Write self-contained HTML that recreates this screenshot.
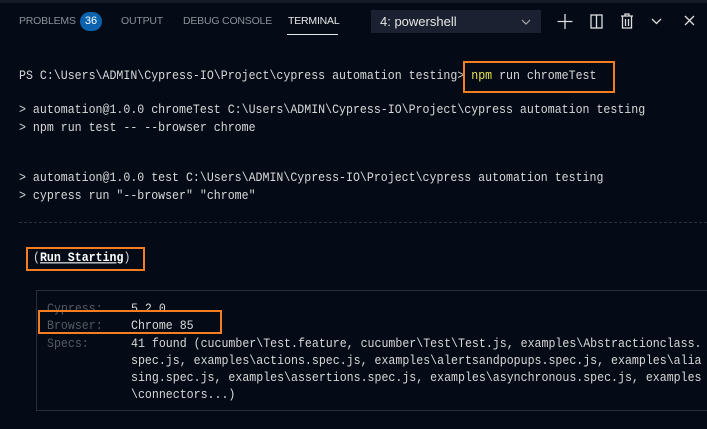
<!DOCTYPE html>
<html><head><style>
body{margin:0;width:707px;height:429px;background:#040b16;overflow:hidden;position:relative;font-family:"Liberation Sans",sans-serif}
.strip{position:absolute;left:0;top:0;width:707px;height:3px;background:#141b28}
.tab{position:absolute;top:15px;font-size:10.5px;color:#8c919a;letter-spacing:-0.2px}
.badge{position:absolute;left:80px;top:12px;width:22px;height:19px;border-radius:10px;background:#0b63b0;color:#fff;font-size:11px;text-align:center;line-height:19px}
.dd{position:absolute;left:371px;top:10px;width:170px;height:23px;background:#1b2130;color:#e6e6e6;font-size:13px;line-height:23px;padding-left:9px;box-sizing:border-box}
.m{position:absolute;font-family:"Liberation Mono",monospace;font-size:11.6px;color:#d8d8d8;white-space:pre;line-height:14px;transform:scaleY(1.1);transform-origin:left center}
.ob{position:absolute;border:2px solid #f57f20}
.g{color:#555a62}
</style></head><body>
<div class="strip"></div>
<div class="tab" style="left:19px">PROBLEMS</div>
<div class="badge">36</div>
<div class="tab" style="left:121px">OUTPUT</div>
<div class="tab" style="left:183px">DEBUG CONSOLE</div>
<div class="tab" style="left:288px;color:#e8e8e8">TERMINAL</div>
<div style="position:absolute;left:287px;top:34px;width:51px;height:1px;background:#e8e8e8"></div>
<div class="dd">4: powershell</div>
<svg style="position:absolute;left:520px;top:17px" width="12" height="10"><path d="M2 3l4 4 4-4" stroke="#aaa" fill="none" stroke-width="1.2"/></svg>
<svg style="position:absolute;left:555px;top:10px" width="150" height="24" stroke="#ddd" fill="none" stroke-width="1.3">
<path d="M10 4v15M2.5 11.5h15"/>
<rect x="36" y="5" width="11" height="13"/><path d="M41.5 5v13"/>
<path d="M66 6h12M70 6V4h4v2M67.5 6v12h9V6M70.5 9v7M73.5 9v7"/>
<path d="M97 9l4.5 4.5 4.5-4.5"/>
<path d="M130 6l9 9M139 6l-9 9"/>
</svg>
<div class="m" style="left:19px;top:70px">PS C:\Users\ADMIN\Cypress-IO\Project\cypress automation testing&gt; <span style="color:#e8e34f">npm</span> run chromeTest</div>
<div class="ob" style="left:463px;top:61px;width:148px;height:28px"></div>
<div class="m" style="left:19px;top:104px">&gt; automation@1.0.0 chromeTest C:\Users\ADMIN\Cypress-IO\Project\cypress automation testing</div>
<div class="m" style="left:19px;top:122px">&gt; npm run test -- --browser chrome</div>
<div class="m" style="left:19px;top:172px">&gt; automation@1.0.0 test C:\Users\ADMIN\Cypress-IO\Project\cypress automation testing</div>
<div class="m" style="left:19px;top:190px">&gt; cypress run "--browser" "chrome"</div>
<div style="position:absolute;left:19px;top:222px;width:688px;border-top:1px dashed #2a313c"></div>
<div class="m" style="left:33px;top:252px">(<span style="color:#fff;font-weight:bold;text-decoration:underline">Run Starting</span>)</div>
<div class="ob" style="left:26px;top:247px;width:115px;height:20px"></div>
<div style="position:absolute;left:36px;top:290px;width:690px;height:119px;border:1px solid #2a2f36"></div>
<div class="m g" style="left:47px;top:303px">Cypress:</div><div class="m" style="left:131px;top:303px">5.2.0</div>
<div class="m g" style="left:47px;top:320px">Browser:</div><div class="m" style="left:131px;top:320px">Chrome 85</div>
<div class="m g" style="left:47px;top:338px">Specs:</div>
<div class="m" style="left:131px;top:338px">41 found (cucumber\Test.feature, cucumber\Test\Test.js, examples\Abstractionclass.</div>
<div class="m" style="left:131px;top:355px">spec.js, examples\actions.spec.js, examples\alertsandpopups.spec.js, examples\alia</div>
<div class="m" style="left:131px;top:372px">sing.spec.js, examples\assertions.spec.js, examples\asynchronous.spec.js, examples</div>
<div class="m" style="left:131px;top:389px">\connectors...)</div>
<div class="ob" style="left:38px;top:310px;width:180px;height:20px"></div>
</body></html>
